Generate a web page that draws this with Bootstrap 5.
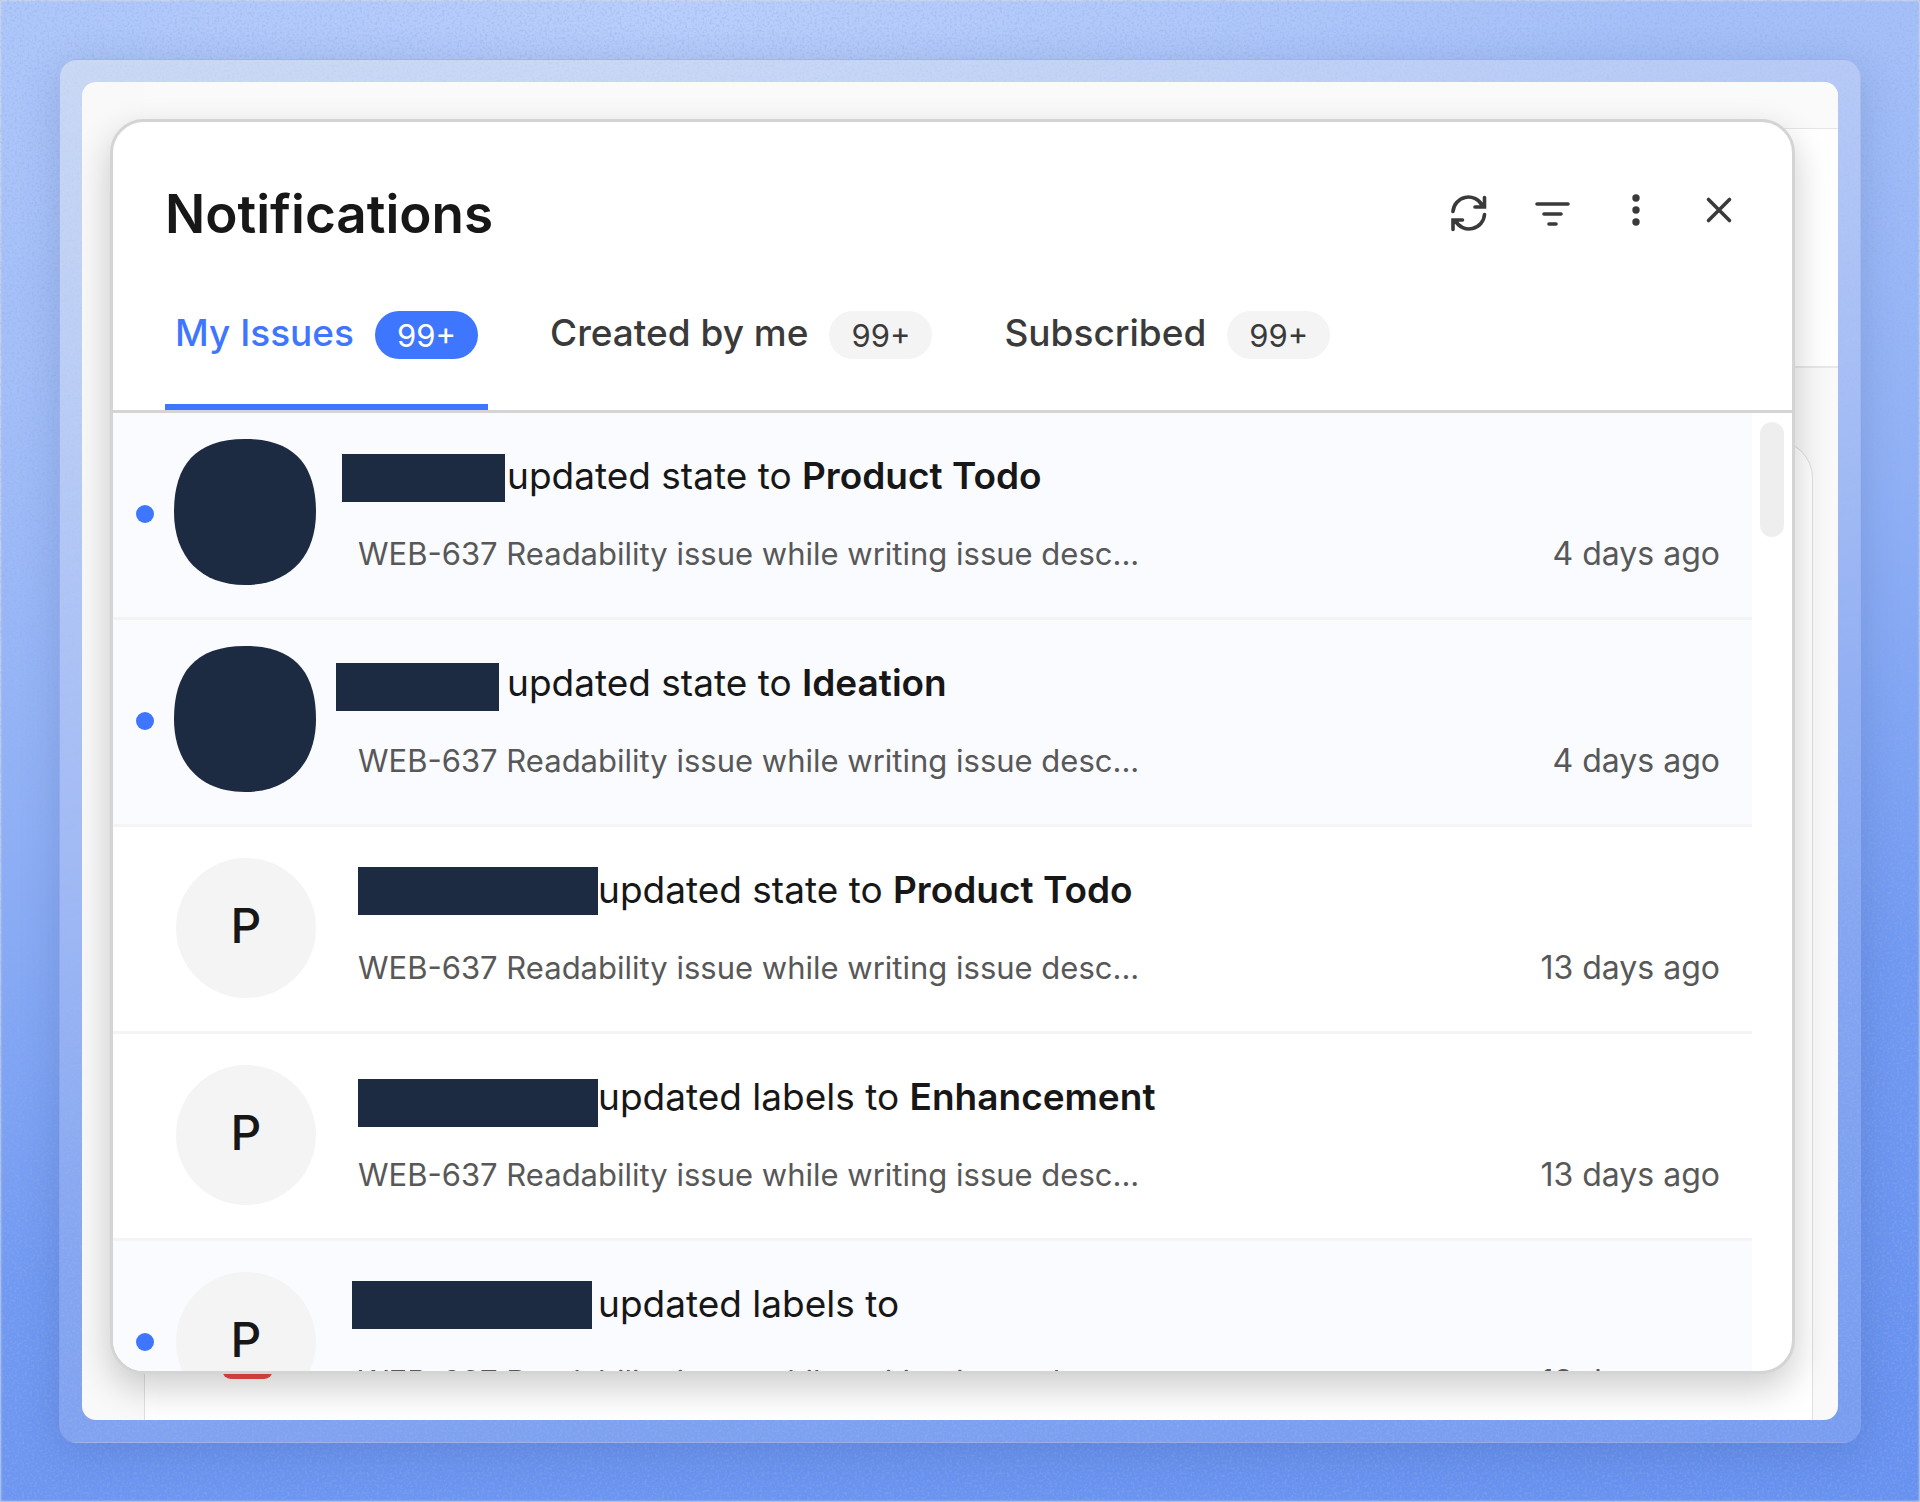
<!DOCTYPE html>
<html lang="en">
<head>
<meta charset="utf-8">
<meta name="viewport" content="width=device-width, initial-scale=1">
<title>Notifications</title>
<link href="https://cdn.jsdelivr.net/npm/bootstrap@5.3.0/dist/css/bootstrap.min.css" rel="stylesheet">
<style>
  body {
    font-family: Inter, "Liberation Sans", sans-serif;
    color: #171717;
    background:
      radial-gradient(ellipse 50% 26% at 36% 0, rgba(190, 210, 252, .8), rgba(190, 210, 252, 0)),
      linear-gradient(170deg, #a9c4fb 0%, #a5c0f9 20%, #8fb0f7 45%, #7099f3 70%, #6691f1 100%);
    box-shadow: inset 0 0 2px 1px rgba(215, 220, 230, .8);
  }
  .grain { z-index: 0; opacity: .36; }
  .frame {
    z-index: 1;
    margin: 59px;
    padding: 22px;
    border: 1px solid rgba(140, 160, 220, .45);
    border-radius: 18px;
    background: linear-gradient(165deg, rgba(220, 228, 240, .6) 0%, rgba(200, 212, 245, .45) 30%, rgba(180, 195, 240, .3) 60%, rgba(170, 190, 240, .25) 100%);
    box-shadow: 0 8px 40px rgba(30, 50, 110, .18);
  }
  .app-window { border-radius: 14px; background: #f9f9f9; }
  .backdrop { z-index: 0; }
  .backdrop-top { height: 47px; margin-left: 62px; background: #fafafa; border-bottom: 1px solid #e5e5e5; }
  .backdrop-bar { height: 239px; margin-left: 62px; background: #fff; border-bottom: 2px solid #e8e8e8; }
  .backdrop-card {
    margin: 72px 25px 0 62px;
    border: 1px solid #e0e0e0;
    border-bottom: 0;
    border-radius: 38px 38px 0 0;
    background: #fff;
  }
  .backdrop-flag {
    left: 140px; bottom: 41px; width: 51px; height: 20px;
    border-radius: 0 0 9px 9px; background: #f04848;
  }
  .panel {
    z-index: 1;
    height: 1255px;
    margin: 37px 43px 46px 28px;
    border: 3px solid #d4d4d4;
    border-radius: 34px;
    box-shadow: 0 14px 36px rgba(0, 0, 0, .2);
  }
  .panel-head { padding: 57px 52px 0 52px; height: 154px; }
  .panel-title { font-size: 53px; line-height: 70px; font-weight: 600; }
  .tool { width: 40px; height: 40px; color: #3a3a3a; }
  .tools { gap: 44px; padding-top: 13px; }
  .tabs { gap: 52px; height: 137px; padding: 0 52px; border-bottom: 3px solid #d4d4d4; }
  .tab {
    gap: 21px; height: 134px; padding: 29px 10px 0;
    font-size: 37px; line-height: 56px; font-weight: 500; color: #3a3a3a;
    border-bottom: 6px solid transparent !important;
  }
  .tab.active { color: #3f76ff; border-bottom-color: #3f76ff !important; }
  .count {
    height: 48px; margin-top: 6px; padding: 0 22px; border-radius: 24px;
    font-size: 31px; line-height: 50px; font-weight: 400; background: #f4f4f4; color: #3a3a3a;
  }
  .active .count { background: #3f76ff; color: #fff; }
  .feed { padding-right: 40px; }
  .item { height: 207px; flex: none; padding: 0 32px 2px 23px; border-bottom: 3px solid #f4f4f4; }
  .item.unread { background: #f9fbff; }
  .dot { width: 18px; height: 18px; margin-right: 22px; border-radius: 50%; }
  .unread .dot { background: #3f76ff; }
  .avatar {
    width: 140px; height: 140px; margin-right: 42px; padding-bottom: 4px;
    border-radius: 50%; background: #f4f4f4; font-size: 48px; font-weight: 500;
  }
  .face { width: 142px; height: 146px; margin: 0 42px 4px -2px; }
  .body-col { padding-top: 38px; }
  .line-1 { font-size: 37px; line-height: 50px; }
  .line-2 { margin-top: 30px; font-size: 31px; line-height: 46px; color: #585858; }
  .when { font-size: 32px; }
  .actor { width: 149px; height: 50px; }
  .actor.wide { width: 240px; }
  .mask { left: 0; top: 2px; width: 100%; height: 48px; background: #1d2b42; }
  .mask.m1 { left: -16px; width: 163px; top: 3px; }
  .mask.m2 { left: -22px; width: 163px; top: 5px; }
  .mask.m4 { top: 7px; }
  .mask.m5 { left: -6px; }
  .thumb { right: 8px; top: 9px; width: 24px; height: 115px; background: #eee; }
</style>
</head>
<body class="min-vh-100 position-relative d-flex">
  <svg class="grain position-absolute top-0 start-0 w-100 h-100" aria-hidden="true">
    <filter id="noise" x="0" y="0" width="100%" height="100%"><feTurbulence type="fractalNoise" baseFrequency="0.4" numOctaves="2" seed="4"/><feColorMatrix values="0 0 0 0 .3  0 0 0 0 .42  0 0 0 0 .75  3.5 0 0 0 -1.6"/></filter>
    <rect width="100%" height="100%" filter="url(#noise)"/>
  </svg>
  <div class="frame position-relative flex-grow-1 d-flex">
    <div class="app-window position-relative flex-grow-1 overflow-hidden">
      <div class="backdrop position-absolute top-0 start-0 w-100 h-100 d-flex flex-column">
        <div class="backdrop-top"></div>
        <div class="backdrop-bar"></div>
        <div class="backdrop-card flex-grow-1"></div>
        <div class="backdrop-flag position-absolute"></div>
      </div>
      <section class="panel position-relative bg-white overflow-hidden d-flex flex-column" aria-labelledby="title">
        <header class="panel-head flex-shrink-0 d-flex justify-content-between align-items-start">
          <h1 id="title" class="panel-title m-0">Notifications</h1>
          <div class="tools d-flex">
            <button type="button" class="tool btn p-0 border-0 d-block" aria-label="Refresh">
              <svg class="d-block" width="40" height="40" viewBox="0 0 40 40" fill="none" stroke="currentColor" stroke-width="3.6" stroke-linecap="round" stroke-linejoin="miter"><path d="M5 19.500a15.500 15.500 0 0 1 29-6.500M36.500 5.500v9.500h-9.500M36.500 22.500a15.500 15.500 0 0 1-29 6.500M5 37.500v-9.500h9.500"/></svg>
            </button>
            <button type="button" class="tool btn p-0 border-0 d-block" aria-label="Filter">
              <svg class="d-block" width="40" height="40" viewBox="0 0 40 40" fill="none" stroke="currentColor" stroke-width="3.6" stroke-linecap="round"><path d="M5 12h31M12 22h17M17 32h7"/></svg>
            </button>
            <button type="button" class="tool btn p-0 border-0 d-block" aria-label="More options">
              <svg class="d-block" width="40" height="40" viewBox="0 0 40 40" fill="currentColor"><circle cx="20" cy="6" r="3.700"/><circle cx="20" cy="18" r="3.700"/><circle cx="20" cy="30" r="3.700"/></svg>
            </button>
            <button type="button" class="tool btn p-0 border-0 d-block" aria-label="Close">
              <svg class="d-block" width="40" height="40" viewBox="0 0 40 40" fill="none" stroke="currentColor" stroke-width="3.600" stroke-linecap="round"><path d="M8.500 7.500l21 21M29.500 7.500L8.500 28.500"/></svg>
            </button>
          </div>
        </header>
        <nav class="tabs flex-shrink-0 d-flex" aria-label="Notification lists">
          <button type="button" class="tab active btn rounded-0 border-0 d-flex align-items-start">My Issues <span class="count">99+</span></button>
          <button type="button" class="tab btn rounded-0 border-0 d-flex align-items-start">Created by me <span class="count">99+</span></button>
          <button type="button" class="tab btn rounded-0 border-0 d-flex align-items-start">Subscribed <span class="count">99+</span></button>
        </nav>
        <div class="position-relative flex-grow-1 overflow-hidden">
          <ul class="feed list-unstyled m-0 d-flex flex-column">
            <li class="item unread d-flex align-items-center">
              <span class="dot"></span>
              <svg class="face flex-shrink-0" viewBox="0 0 142 146" aria-hidden="true"><path fill="#1d2b42" d="M71 0C122 0 142 28 142 73S115 146 71 146 0 118 0 73 20 0 71 0Z"/></svg>
              <div class="body-col align-self-start flex-grow-1">
                <div class="line-1 d-flex"><span class="actor position-relative"><span class="mask m1 position-absolute"></span></span><span>updated state to <strong class="fw-semibold">Product Todo</strong></span></div>
                <div class="line-2 d-flex justify-content-between"><span>WEB-637 Readability issue while writing issue desc...</span><span class="when">4 days ago</span></div>
              </div>
            </li>
            <li class="item unread d-flex align-items-center">
              <span class="dot"></span>
              <svg class="face flex-shrink-0" viewBox="0 0 142 146" aria-hidden="true"><path fill="#1d2b42" d="M71 0C122 0 142 28 142 73S115 146 71 146 0 118 0 73 20 0 71 0Z"/></svg>
              <div class="body-col align-self-start flex-grow-1">
                <div class="line-1 d-flex"><span class="actor position-relative"><span class="mask m2 position-absolute"></span></span><span>updated state to <strong class="fw-semibold">Ideation</strong></span></div>
                <div class="line-2 d-flex justify-content-between"><span>WEB-637 Readability issue while writing issue desc...</span><span class="when">4 days ago</span></div>
              </div>
            </li>
            <li class="item d-flex align-items-center">
              <span class="dot"></span>
              <span class="avatar flex-shrink-0 d-flex align-items-center justify-content-center">P</span>
              <div class="body-col align-self-start flex-grow-1">
                <div class="line-1 d-flex"><span class="actor wide position-relative"><span class="mask position-absolute"></span></span><span>updated state to <strong class="fw-semibold">Product Todo</strong></span></div>
                <div class="line-2 d-flex justify-content-between"><span>WEB-637 Readability issue while writing issue desc...</span><span class="when">13 days ago</span></div>
              </div>
            </li>
            <li class="item d-flex align-items-center">
              <span class="dot"></span>
              <span class="avatar flex-shrink-0 d-flex align-items-center justify-content-center">P</span>
              <div class="body-col align-self-start flex-grow-1">
                <div class="line-1 d-flex"><span class="actor wide position-relative"><span class="mask m4 position-absolute"></span></span><span>updated labels to <strong class="fw-semibold">Enhancement</strong></span></div>
                <div class="line-2 d-flex justify-content-between"><span>WEB-637 Readability issue while writing issue desc...</span><span class="when">13 days ago</span></div>
              </div>
            </li>
            <li class="item unread d-flex align-items-center">
              <span class="dot"></span>
              <span class="avatar flex-shrink-0 d-flex align-items-center justify-content-center">P</span>
              <div class="body-col align-self-start flex-grow-1">
                <div class="line-1 d-flex"><span class="actor wide position-relative"><span class="mask m5 position-absolute"></span></span><span>updated labels to</span></div>
                <div class="line-2 d-flex justify-content-between"><span>WEB-637 Readability issue while writing issue desc...</span><span class="when">13 days ago</span></div>
              </div>
            </li>
          </ul>
          <div class="thumb position-absolute rounded-pill"></div>
        </div>
      </section>
    </div>
  </div>
<script src="https://cdn.jsdelivr.net/npm/bootstrap@5.3.0/dist/js/bootstrap.bundle.min.js"></script>
</body>
</html>
